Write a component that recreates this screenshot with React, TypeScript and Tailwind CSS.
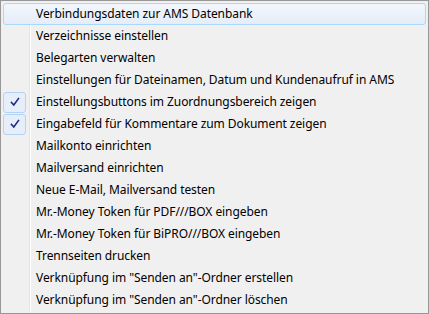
import React from "react";

type Item = { label: string; checked?: boolean; hot?: boolean };

const items: Item[] = [
  { label: "Verbindungsdaten zur AMS Datenbank", hot: true },
  { label: "Verzeichnisse einstellen" },
  { label: "Belegarten verwalten" },
  { label: "Einstellungen für Dateinamen, Datum und Kundenaufruf in AMS" },
  { label: "Einstellungsbuttons im Zuordnungsbereich zeigen", checked: true },
  { label: "Eingabefeld für Kommentare zum Dokument zeigen", checked: true },
  { label: "Mailkonto einrichten" },
  { label: "Mailversand einrichten" },
  { label: "Neue E-Mail, Mailversand testen" },
  { label: "Mr.-Money Token für PDF///BOX eingeben" },
  { label: "Mr.-Money Token für BiPRO///BOX eingeben" },
  { label: "Trennseiten drucken" },
  { label: "Verknüpfung im \"Senden an\"-Ordner erstellen" },
  { label: "Verknüpfung im \"Senden an\"-Ordner löschen" },
];

const Check = () => (
  <svg width="12" height="12" viewBox="0 0 12 12">
    <path d="M2.5 6.5 L4.8 9 L9.5 2.5" fill="none" stroke="#1c2a85" strokeWidth="1.6" strokeLinecap="square" />
  </svg>
);

const App: React.FC = () => {
  return (
    <div
      className="w-[429px] h-[314px] border border-[#979797] bg-[#f0f0f0] p-[2px] text-[12px] text-black"
      style={{ fontFamily: '"Segoe UI", "Noto Sans", sans-serif' }}
    >
      <div className="h-full bg-[linear-gradient(to_right,transparent_26px,#e2e3e3_26px,#e2e3e3_27px,#ffffff_27px,#ffffff_28px,transparent_28px)]">
        {items.map((item) => (
          <div
            key={item.label}
            className={`h-[22px] flex items-center rounded-[3px] border ${
              item.hot
                ? "border-[#a8d8fb] bg-[linear-gradient(to_bottom,#f2f6fc,#e6edf8)]"
                : "border-transparent"
            }`}
          >
            <div className="w-[23px] h-[22px] -my-px -ml-px flex items-center justify-center shrink-0">
              {item.checked && (
                <div className="w-[23px] h-[21px] rounded-[3px] border border-[#b4d3f4] bg-[#e6eef9] flex items-center justify-center">
                  <Check />
                </div>
              )}
            </div>
            <span className="pl-[10px] leading-none whitespace-nowrap tracking-[-0.07px]">{item.label}</span>
          </div>
        ))}
      </div>
    </div>
  );
};

export default App;
